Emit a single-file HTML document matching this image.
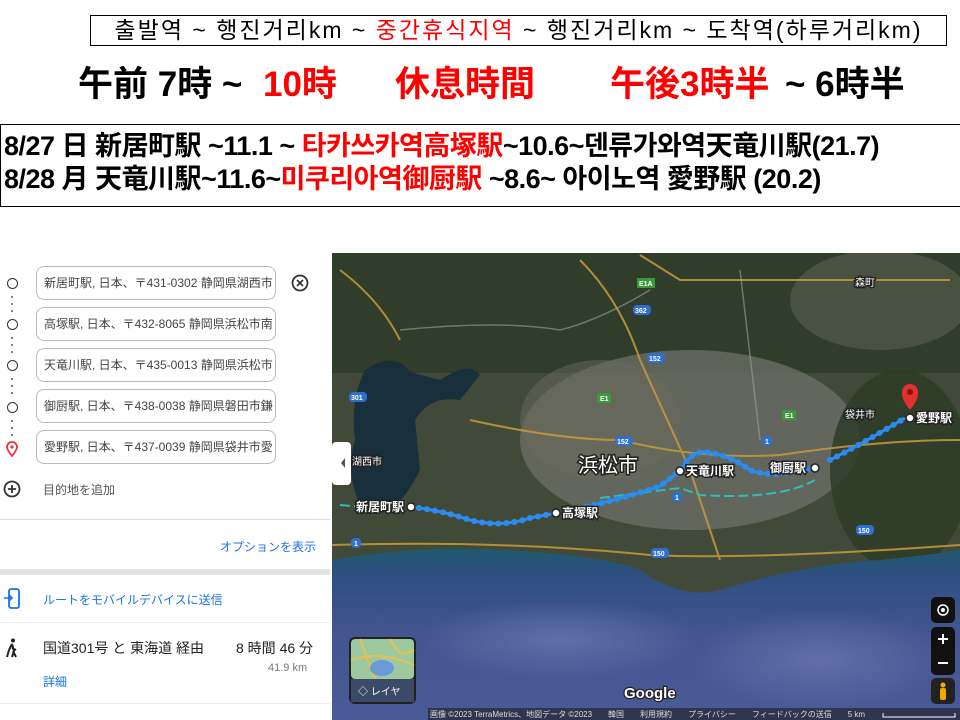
<!DOCTYPE html>
<html><head><meta charset="utf-8"><style>
*{margin:0;padding:0;box-sizing:border-box}
body{width:960px;height:720px;overflow:hidden;background:#fff;font-family:"Liberation Sans","Noto Sans CJK KR","Noto Sans CJK JP",sans-serif;position:relative}
.a{position:absolute;white-space:nowrap}
.r{color:#f00}
.hdr{left:90px;top:15px;width:857px;height:31px;border:1.5px solid #000;font-size:23px;line-height:29px;text-align:center;letter-spacing:2px}
.bg{top:56px;font-size:35px;font-weight:bold;font-family:"Liberation Sans","Noto Sans CJK JP",sans-serif}
.box{left:0;top:124px;width:962px;height:83px;border:1.5px solid #000}
.ln{left:4px;font-size:27px;font-weight:bold;letter-spacing:-0.5px}
.inp{left:36px;width:240px;height:34px;border:1px solid #bbb;border-radius:8px;font-size:12px;color:#444;padding-left:7px;line-height:32px;overflow:hidden;font-family:"Liberation Sans","Noto Sans CJK JP",sans-serif}
.dot{left:7px;width:11px;height:11px;border:1.8px solid #333;border-radius:50%}
.vd{left:11px;width:2px;height:2px;background:#555;border-radius:1px}
.jp{font-family:"Liberation Sans","Noto Sans CJK JP",sans-serif}
.lbl{font-family:"Liberation Sans","Noto Sans CJK JP",sans-serif;font-size:12px;fill:#fff;stroke:#222;stroke-width:3px;paint-order:stroke;font-weight:bold}
</style></head><body>
<div class="a hdr">출발역 ~ 행진거리km ~ <span class="r">중간휴식지역</span> ~ 행진거리km ~ 도착역(하루거리km)</div>
<div class="a bg" style="left:78px">午前 7時 ~</div>
<div class="a bg r" style="left:263px">10時</div>
<div class="a bg r" style="left:395px">休息時間</div>
<div class="a bg r" style="left:610px">午後3時半</div>
<div class="a bg" style="left:785px">~ 6時半</div>
<div class="a box"></div>
<div class="a ln" style="top:124px">8/27 日 新居町駅 ~11.1 ~ <span class="r">타카쓰카역高塚駅</span>~10.6~덴류가와역天竜川駅(21.7)</div>
<div class="a ln" style="top:157px">8/28 月 天竜川駅~11.6~<span class="r">미쿠리아역御厨駅</span> ~8.6~ 아이노역 愛野駅 (20.2)</div>

<!-- left panel -->
<div class="a" style="left:0;top:253px;width:332px;height:467px;background:#fff"></div>
<div class="a dot" style="top:278px"></div>
<div class="a dot" style="top:319px"></div>
<div class="a dot" style="top:360px"></div>
<div class="a dot" style="top:402px"></div>
<div class="a vd" style="top:296px"></div><div class="a vd" style="top:303px"></div><div class="a vd" style="top:310px"></div>
<div class="a vd" style="top:337px"></div><div class="a vd" style="top:344px"></div><div class="a vd" style="top:351px"></div>
<div class="a vd" style="top:378px"></div><div class="a vd" style="top:385px"></div><div class="a vd" style="top:392px"></div>
<div class="a vd" style="top:420px"></div><div class="a vd" style="top:427px"></div><div class="a vd" style="top:434px"></div>
<svg class="a" style="left:5px;top:441px" width="14" height="16" viewBox="0 0 14 16"><path d="M7 15C3 10 2 8 2 6a5 5 0 0 1 10 0c0 2-1 4-5 9z" fill="none" stroke="#e33" stroke-width="1.8"/><circle cx="7" cy="6" r="1.6" fill="#e33"/></svg>
<div class="a inp" style="top:266px">新居町駅, 日本、〒431-0302 静岡県湖西市</div>
<div class="a inp" style="top:307px">高塚駅, 日本、〒432-8065 静岡県浜松市南</div>
<div class="a inp" style="top:348px">天竜川駅, 日本、〒435-0013 静岡県浜松市</div>
<div class="a inp" style="top:389px">御厨駅, 日本、〒438-0038 静岡県磐田市鎌</div>
<div class="a inp" style="top:430px">愛野駅, 日本、〒437-0039 静岡県袋井市愛</div>
<svg class="a" style="left:291px;top:274px" width="18" height="18"><circle cx="9" cy="9" r="7.5" fill="none" stroke="#333" stroke-width="1.8"/><path d="M6 6l6 6M12 6l-6 6" stroke="#333" stroke-width="1.8"/></svg>
<svg class="a" style="left:3px;top:480px" width="18" height="18"><circle cx="9" cy="9" r="7.5" fill="none" stroke="#333" stroke-width="1.8"/><path d="M9 5v8M5 9h8" stroke="#333" stroke-width="1.8"/></svg>
<div class="a jp" style="left:43px;top:481px;font-size:12px;color:#555">目的地を追加</div>
<div class="a" style="left:0;top:519px;width:330px;height:1px;background:#ddd"></div>
<div class="a jp" style="left:220px;top:538px;font-size:12px;color:#1a73e8">オプションを表示</div>
<div class="a" style="left:0;top:569px;width:330px;height:6px;background:#e3e3e3"></div>
<svg class="a" style="left:4px;top:588px" width="16" height="22"><rect x="5" y="1" width="10" height="19" rx="2" fill="none" stroke="#1a73e8" stroke-width="1.8"/><path d="M0 10h8M5 7l3 3-3 3" fill="none" stroke="#1a73e8" stroke-width="1.6"/></svg>
<div class="a jp" style="left:43px;top:591px;font-size:12px;color:#1a73e8">ルートをモバイルデバイスに送信</div>
<div class="a" style="left:0;top:622px;width:330px;height:1px;background:#eee"></div>
<svg class="a" style="left:6px;top:638px" width="12" height="20" viewBox="0 0 12 20"><circle cx="7" cy="2.5" r="2" fill="#222"/><path d="M6 6L3 12M6 6l2 7-2 6M6 10l4 2M3 12l-2 7M7 13l3 6" stroke="#222" stroke-width="2" fill="none"/></svg>
<div class="a jp" style="left:43px;top:638px;font-size:14px;color:#222">国道301号 と 東海道 経由</div>
<div class="a jp" style="left:236px;top:638px;font-size:14px;color:#222">8 時間 46 分</div>
<div class="a" style="left:268px;top:662px;font-size:11px;color:#777">41.9 km</div>
<div class="a jp" style="left:43px;top:673px;font-size:12px;color:#1a73e8">詳細</div>
<div class="a" style="left:0;top:703px;width:330px;height:1px;background:#eee"></div>

<!-- map -->
<svg class="a" style="left:332px;top:253px" width="628" height="467" viewBox="332 253 628 467">
<defs>
<linearGradient id="sea" x1="0" y1="0" x2="0" y2="1"><stop offset="0" stop-color="#1f5a6e"/><stop offset="0.15" stop-color="#2d4f80"/><stop offset="0.5" stop-color="#44558f"/><stop offset="1" stop-color="#4a5a98"/></linearGradient>
<radialGradient id="cl" cx="0.5" cy="0.5" r="0.5"><stop offset="0" stop-color="#6c7ab0" stop-opacity=".7"/><stop offset="1" stop-color="#6c7ab0" stop-opacity="0"/></radialGradient>
</defs>
<rect x="332" y="253" width="628" height="467" fill="#414a38"/>
<rect x="332" y="253" width="628" height="120" fill="#2f3d2a"/>
<ellipse cx="690" cy="440" rx="170" ry="90" fill="#6e7068" opacity=".75"/>
<ellipse cx="600" cy="420" rx="80" ry="60" fill="#6a6a5c" opacity=".5"/>
<ellipse cx="900" cy="470" rx="70" ry="100" fill="#2c3a25" opacity=".8"/>
<ellipse cx="880" cy="300" rx="90" ry="50" fill="#5c6050" opacity=".6"/>
<path d="M365 370 Q395 350 410 372 L440 380 Q470 360 480 375 L460 400 Q430 395 415 420 L420 470 Q405 500 390 510 L360 505 Q345 470 355 440 Q350 400 365 370Z" fill="#17303c"/>
<path d="M332 560 Q420 545 500 550 Q600 555 640 570 Q680 600 720 590 Q800 565 880 560 Q930 555 960 550 L960 720 L332 720Z" fill="url(#sea)"/>
<ellipse cx="820" cy="660" rx="130" ry="50" fill="url(#cl)"/>
<ellipse cx="560" cy="640" rx="140" ry="40" fill="url(#cl)"/>
<g fill="none" stroke="#c89a3c" stroke-width="2" opacity=".85">
<path d="M332 545 Q500 540 650 555 Q750 560 960 545"/>
<path d="M470 420 Q560 440 620 440 Q700 460 780 455 Q880 440 960 440"/>
<path d="M580 260 Q620 300 640 360 L690 470 L720 560"/>
<path d="M340 270 Q380 300 400 340"/>
<path d="M640 255 L680 280 L950 280"/>
</g>
<g fill="none" stroke="#9aa0a0" stroke-width="1.5" opacity=".6">
<path d="M400 330 Q500 320 560 330 Q600 320 650 290"/>
<path d="M740 270 L760 440"/>
</g>
<path d="M340 505 L400 510 M600 498 L680 488 L700 495 Q780 500 815 480" stroke="#3bb" stroke-width="2" fill="none" stroke-dasharray="10 4"/>
<path d="M411 507 Q440 510 470 520 Q500 528 530 518 L556 513 M570 510 Q620 500 660 486 L680 471 Q690 452 705 452 Q730 455 750 470 Q770 478 800 470 L815 468 M830 460 Q860 445 905 418" fill="none" stroke="#2a8cf0" stroke-width="6" stroke-linecap="round" stroke-dasharray="0.1 8"/>
<path d="M411 507 Q440 510 470 520 Q500 528 530 518 L556 513 M570 510 Q620 500 660 486 L680 471 Q690 452 705 452 Q730 455 750 470 Q770 478 800 470 L815 468 M830 460 Q860 445 905 418" fill="none" stroke="#2a8cf0" stroke-width="3"/>
<g fill="#fff" stroke="#222" stroke-width="1.5">
<circle cx="411" cy="507" r="4"/><circle cx="556" cy="513" r="4"/><circle cx="680" cy="471" r="4"/><circle cx="815" cy="468" r="4"/><circle cx="910" cy="418" r="4"/>
</g>
<path d="M910 410 C902 400 902 396 902 392 a8 8 0 0 1 16 0 c0 4 0 8 -8 18z" fill="#e33030"/>
<circle cx="910" cy="392" r="3" fill="#8a1010"/>
<text class="lbl" x="356" y="511">新居町駅</text>
<text class="lbl" x="562" y="517">高塚駅</text>
<text class="lbl" x="686" y="475">天竜川駅</text>
<text class="lbl" x="770" y="472">御厨駅</text>
<text class="lbl" x="916" y="422">愛野駅</text>
<text class="lbl" x="578" y="472" style="font-size:20px;font-weight:normal">浜松市</text>
<text class="lbl" x="352" y="465" style="font-size:10px;font-weight:normal">湖西市</text>
<text class="lbl" x="845" y="418" style="font-size:10px;font-weight:normal">袋井市</text>
<text class="lbl" x="855" y="286" style="font-size:10px;font-weight:normal">森町</text>
<g font-family="Liberation Sans" font-size="7" fill="#fff" font-weight="bold">
<rect x="637" y="278" width="18" height="10" fill="#3a9a3a"/><text x="639" y="286">E1A</text>
<rect x="782" y="410" width="14" height="10" fill="#3a9a3a"/><text x="785" y="418">E1</text>
<rect x="597" y="393" width="14" height="10" fill="#3a9a3a"/><text x="600" y="401">E1</text>
<rect x="633" y="305" width="18" height="10" rx="4" fill="#2f6fd0"/><text x="635" y="313">362</text>
<rect x="647" y="353" width="18" height="10" rx="4" fill="#2f6fd0"/><text x="649" y="361">152</text>
<rect x="615" y="436" width="18" height="10" rx="4" fill="#2f6fd0"/><text x="617" y="444">152</text>
<rect x="349" y="392" width="18" height="10" rx="4" fill="#2f6fd0"/><text x="351" y="400">301</text>
<rect x="856" y="525" width="18" height="10" rx="4" fill="#2f6fd0"/><text x="858" y="533">150</text>
<rect x="651" y="548" width="18" height="10" rx="4" fill="#2f6fd0"/><text x="653" y="556">150</text>
<rect x="762" y="436" width="10" height="10" rx="4" fill="#2f6fd0"/><text x="765" y="444">1</text>
<rect x="672" y="492" width="10" height="10" rx="4" fill="#2f6fd0"/><text x="675" y="500">1</text>
<rect x="351" y="538" width="10" height="10" rx="4" fill="#2f6fd0"/><text x="354" y="546">1</text>
</g>
<rect x="332" y="442" width="19" height="43" rx="4" fill="#fff"/>
<path d="M345 458 L341 463 L345 468z" fill="#555"/>
<rect x="349" y="637" width="67" height="67" rx="6" fill="#222"/>
<rect x="351" y="639" width="63" height="40" rx="4" fill="#9dc9a0"/>
<path d="M351 660 Q380 650 414 665 M360 639 L375 679 M390 639 Q400 660 414 650" stroke="#e8c050" stroke-width="2" fill="none"/>
<ellipse cx="382" cy="668" rx="12" ry="8" fill="#6a9ad8"/>
<rect x="351" y="679" width="63" height="23" fill="#3c4a6a"/>
<text x="358" y="695" font-family="Liberation Sans,Noto Sans CJK JP,sans-serif" font-size="10" fill="#fff">◇ レイヤ</text>
<rect x="931" y="597" width="24" height="26" rx="5" fill="#111"/>
<circle cx="943" cy="610" r="5" fill="none" stroke="#fff" stroke-width="1.5"/><circle cx="943" cy="610" r="2" fill="#fff"/>
<rect x="931" y="627" width="24" height="48" rx="5" fill="#111"/>
<path d="M938 639h10M943 634v10M938 663h10" stroke="#fff" stroke-width="2"/>
<rect x="931" y="678" width="24" height="26" rx="5" fill="#222"/>
<circle cx="943" cy="685" r="2.5" fill="#f5a800"/><rect x="940" y="688" width="6" height="12" rx="2" fill="#f5a800"/>
<text x="624" y="698" font-family="Liberation Sans,sans-serif" font-size="15" fill="#fff" stroke="#222" stroke-width="2.5" paint-order="stroke" font-weight="bold">Google</text>
<rect x="428" y="708" width="532" height="12" fill="#2a2f40" opacity=".85"/>
<text x="430" y="717" font-family="Liberation Sans,Noto Sans CJK JP,sans-serif" font-size="8" fill="#ddd">画像 ©2023 TerraMetrics、地図データ ©2023　　韓国　　利用規約　　プライバシー　　フィードバックの送信　　5 km</text>
<path d="M883 713v4h72v-4" stroke="#fff" fill="none"/>
</svg>
</body></html>
